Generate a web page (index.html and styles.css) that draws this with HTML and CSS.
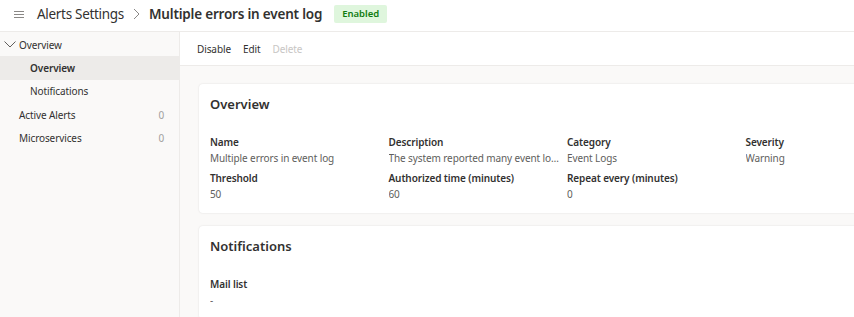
FILE: index.html
```html
<!DOCTYPE html>
<html lang="en">
<head>
  <meta charset="UTF-8">
  <meta name="viewport" content="width=device-width, initial-scale=1.0">
  <title>Alerts Settings</title>
  <link rel="stylesheet" href="styles.css">
</head>
<body>

  <!-- Header -->
  <div class="header">
    <svg class="menu-icon" width="10" height="7" viewBox="0 0 10 7">
      <path d="M0 0.5h10M0 3.5h10M0 6.5h10" stroke="#8a8886" stroke-width="1"/>
    </svg>
    <span class="crumb">Alerts Settings</span>
    <svg class="crumb-sep" width="7" height="12" viewBox="0 0 7 12">
      <path d="M1 1l5 5-5 5" fill="none" stroke="#8a8886" stroke-width="1"/>
    </svg>
    <span class="crumb current">Multiple errors in event log</span>
    <span class="badge">Enabled</span>
  </div>

  <div class="layout">
    <!-- Side navigation -->
    <div class="sidebar">
      <div class="nav-group">
        <svg class="chevron" width="12" height="7" viewBox="0 0 12 7">
          <path d="M0.5 0.5l5.5 5.5 5.5-5.5" fill="none" stroke="#605e5c" stroke-width="1"/>
        </svg>
        Overview
      </div>
      <div class="nav-item sub selected">Overview</div>
      <div class="nav-item sub">Notifications</div>
      <div class="nav-item">Active Alerts <span class="count">0</span></div>
      <div class="nav-item">Microservices <span class="count">0</span></div>
    </div>

    <!-- Main -->
    <div class="main">
      <div class="command-bar">
        <button class="cmd">Disable</button>
        <button class="cmd">Edit</button>
        <button class="cmd disabled">Delete</button>
      </div>

      <div class="content">
        <div class="card">
          <h2>Overview</h2>
          <div class="fields">
            <div class="field">
              <div class="label">Name</div>
              <div class="value">Multiple errors in event log</div>
            </div>
            <div class="field">
              <div class="label">Description</div>
              <div class="value">The system reported many event logs with errors</div>
            </div>
            <div class="field">
              <div class="label">Category</div>
              <div class="value">Event Logs</div>
            </div>
            <div class="field">
              <div class="label">Severity</div>
              <div class="value">Warning</div>
            </div>
            <div class="field">
              <div class="label">Threshold</div>
              <div class="value">50</div>
            </div>
            <div class="field">
              <div class="label">Authorized time (minutes)</div>
              <div class="value">60</div>
            </div>
            <div class="field">
              <div class="label">Repeat every (minutes)</div>
              <div class="value">0</div>
            </div>
          </div>
        </div>

        <div class="card">
          <h2>Notifications</h2>
          <div class="fields">
            <div class="field">
              <div class="label">Mail list</div>
              <div class="value">-</div>
            </div>
          </div>
        </div>
      </div>
    </div>
  </div>

</body>
</html>
```

FILE: styles.css
```css
body {
  margin: 0;
  padding: 0;
  font-family: "Noto Sans", "Open Sans", sans-serif;
  font-size: 10px;
  letter-spacing: -0.1px;
  color: #323130;
  background-color: #fff;
  overflow: hidden;
}
.header {
  height: 32px;
  display: flex;
  align-items: center;
  border-bottom: 1px solid #edebe9;
  box-sizing: border-box;
  white-space: nowrap;
  padding-bottom: 3px;
}
.menu-icon {
  margin-left: 14px;
  margin-right: 13px;
}
.crumb {
  font-size: 13.5px;
  letter-spacing: -0.3px;
  color: #323130;
}
.crumb.current {
  font-size: 13.5px;
  font-weight: 600;
  letter-spacing: -0.2px;
}
.crumb-sep {
  margin: 0 9px 0 9px;
}
.badge {
  margin-left: 12px;
  background-color: #dff6dd;
  color: #107c10;
  font-size: 9.5px;
  font-weight: 600;
  letter-spacing: 0;
  padding: 0 8px;
  height: 18px;
  line-height: 18px;
  border-radius: 2px;
}
.layout {
  display: flex;
  height: calc(100vh - 32px);
}
.sidebar {
  width: 180px;
  flex-shrink: 0;
  background-color: #faf9f8;
  border-right: 1px solid #edebe9;
  box-sizing: border-box;
  padding-top: 1px;
}
.nav-group {
  height: 23px;
  display: flex;
  align-items: center;
  padding-left: 4px;
  color: #323130;
}
.chevron {
  margin-right: 3px;
}
.nav-item {
  height: 23.5px;
  display: flex;
  align-items: center;
  padding-left: 19px;
  padding-right: 15px;
  color: #323130;
}
.nav-item.sub {
  padding-left: 30px;
}
.nav-item.selected {
  background-color: #edebe9;
  font-weight: 600;
}
.count {
  margin-left: auto;
  color: #a19f9d;
}
.main {
  flex: 1;
  display: flex;
  flex-direction: column;
  min-width: 0;
}
.command-bar {
  height: 34px;
  flex-shrink: 0;
  display: flex;
  align-items: center;
  padding-left: 14px;
  background-color: #fff;
  border-bottom: 1px solid #edebe9;
  box-sizing: border-box;
}
.cmd {
  background: none;
  border: none;
  font-family: inherit;
  font-size: 10px;
  letter-spacing: -0.1px;
  color: #323130;
  padding: 0 3px;
  margin-right: 6px;
}
.cmd.disabled {
  color: #c8c6c4;
}
.content {
  flex: 1;
  background-color: #faf9f8;
  padding: 18px 0 0 19px;
}
.card {
  width: 760px;
  background-color: #fff;
  border-radius: 4px;
  box-shadow: 0 0 2px rgba(0, 0, 0, 0.12);
  padding: 8px 11px 11px;
  box-sizing: border-box;
  margin-bottom: 13px;
}
.card h2 {
  margin: 0 0 18px;
  font-size: 13px;
  font-weight: 600;
  letter-spacing: 0;
  line-height: 24px;
}
.fields {
  display: grid;
  grid-template-columns: repeat(4, 178.5px);
  row-gap: 4px;
}
.field {
  min-width: 0;
  padding-right: 8px;
}
.label {
  font-weight: 600;
  line-height: 16px;
}
.value {
  color: #605e5c;
  line-height: 16px;
  white-space: nowrap;
  overflow: hidden;
  text-overflow: ellipsis;
}
```
